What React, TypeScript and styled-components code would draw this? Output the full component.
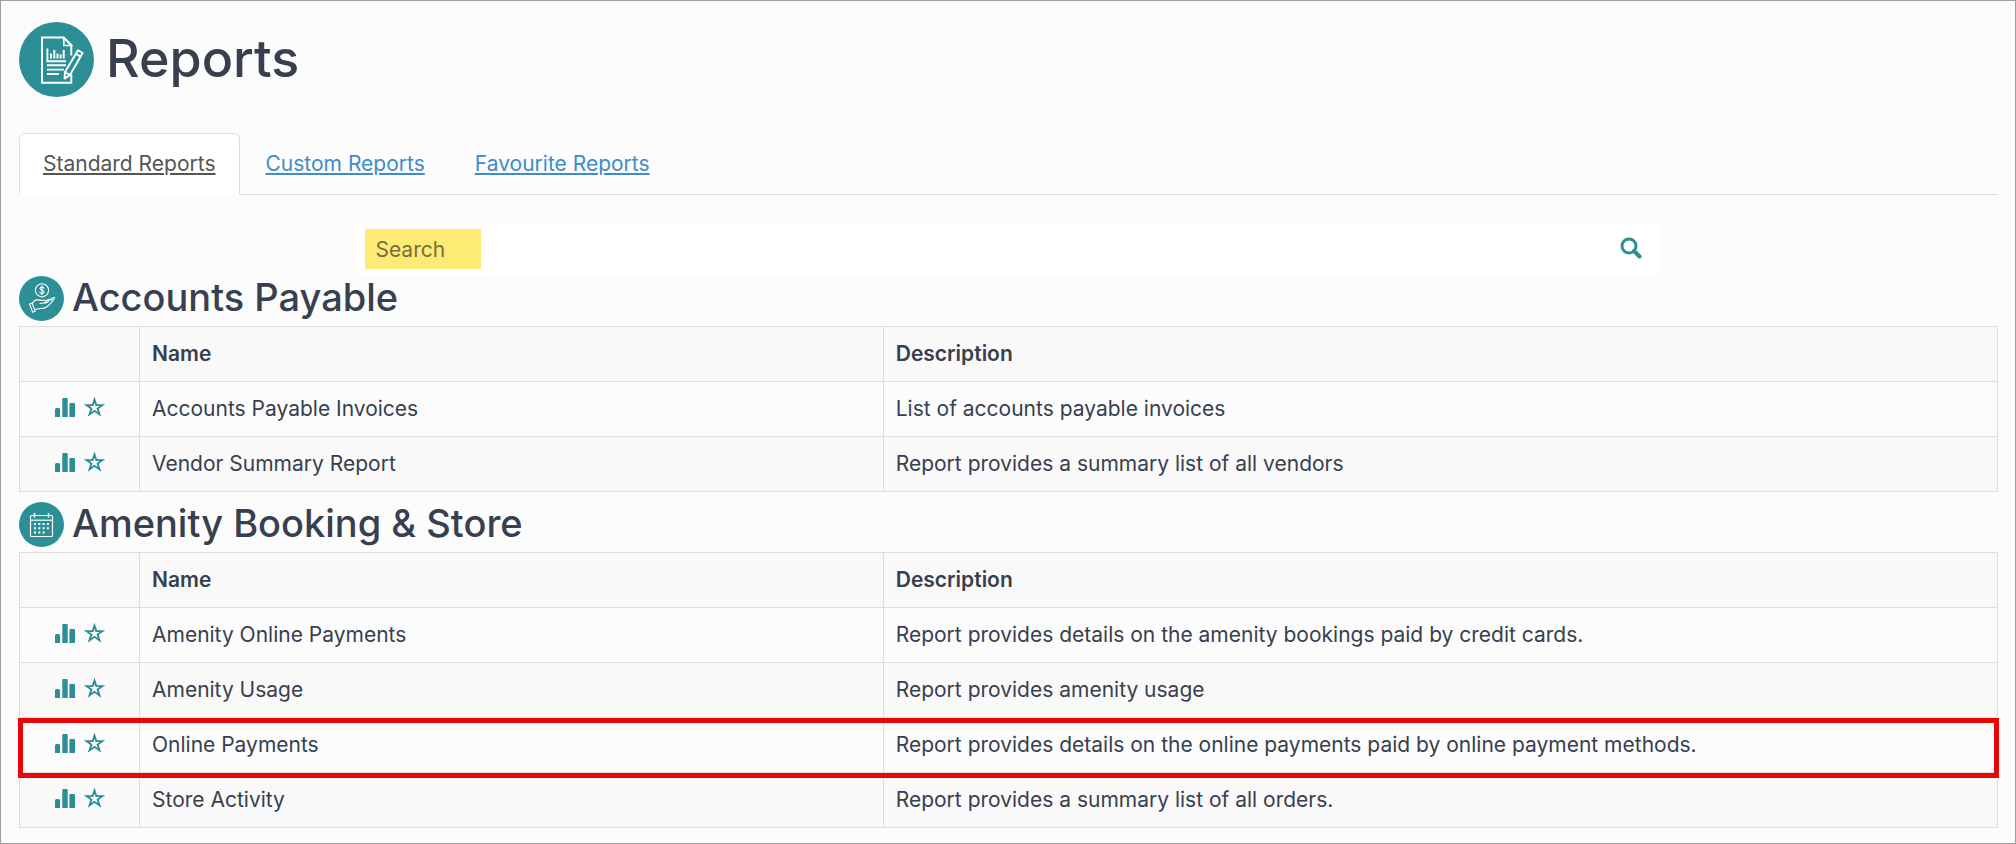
import React from "react";
import styled, { createGlobalStyle } from "styled-components";

const teal = "#2b8f95";
const ink = "#383f4e";
const line = "#dddddd";

const GlobalStyle = createGlobalStyle`
  *, *::before, *::after { box-sizing: border-box; }
  body {
    margin: 0;
    background: #fcfcfc;
    color: ${ink};
    font-family: Inter, "Liberation Sans", sans-serif;
    font-size: 21px;
    line-height: 30px;
  }
`;

const Page = styled.main`
  min-height: 100vh;
  padding: 21px 17px 14px 18px;
  border: 1px solid #a0a0a0;
`;

const PageHeader = styled.header`
  display: flex;
  align-items: flex-start;
  gap: 12px;
  margin-bottom: 36px;
`;

const PageTitle = styled.h1`
  margin: 0;
  font-size: 52px;
  font-weight: 500;
  line-height: 73px;
`;

const Tabs = styled.nav`
  display: flex;
  gap: 2px;
  border-bottom: 1px solid ${line};
`;

const Tab = styled.a<{ $active?: boolean }>`
  margin-bottom: -1px;
  padding: 15px 23px;
  border: 1px solid ${(p) => (p.$active ? line : "transparent")};
  border-bottom-color: ${(p) => (p.$active ? "#ffffff" : "transparent")};
  border-radius: 6px 6px 0 0;
  background: ${(p) => (p.$active ? "#ffffff" : "transparent")};
  color: ${(p) => (p.$active ? "#555555" : "#428bca")};
  text-decoration: underline;
  text-decoration-thickness: 2px;
  text-underline-offset: 2px;
`;

const SearchForm = styled.form`
  display: flex;
  align-items: center;
  margin: 29px 17% 2px;
  padding: 5px 10px;
  border-radius: 6px;
  background: #ffffff;
`;

const SearchInput = styled.input`
  flex: 1;
  min-width: 0;
  height: 40px;
  padding: 0 10px;
  border: 0;
  outline: 0;
  background: linear-gradient(#fdeb75, #fdeb75) left / 116px 100% no-repeat;
  color: ${ink};
  font: inherit;
  &::placeholder { color: #75703f; opacity: 1; }
`;

const IconButton = styled.button`
  display: inline-flex;
  padding: 0;
  border: 0;
  background: none;
  color: ${teal};
  cursor: pointer;
`;

const SearchButton = styled(IconButton)`
  padding: 0 10px 3px;
`;

const Section = styled.section`
  margin-bottom: 10px;
  &:last-child { margin-bottom: 0; }
`;

const SectionHeader = styled.header`
  display: flex;
  align-items: flex-start;
  gap: 8px;
  margin-bottom: 5px;
`;

const SectionTitle = styled.h2`
  margin: 0;
  font-size: 38px;
  font-weight: 500;
  line-height: 42px;
`;

const Table = styled.table`
  width: 100%;
  table-layout: fixed;
  border-collapse: collapse;
`;

const ActionCol = styled.col`
  width: 120px;
`;

const NameCol = styled.col`
  width: 37.6%;
`;

const Row = styled.tr<{ $marked?: boolean }>`
  position: ${(p) => (p.$marked ? "relative" : "static")};
  background: #fcfcfc;
  &:nth-child(even) { background: #f9f9f9; }
`;

const Marker = styled.span`
  position: absolute;
  inset: 0 -1px -5px -2px;
  border: 5px solid #ea0606;
  pointer-events: none;
`;

const HeadRow = styled.tr`
  background: #f9f9f9;
`;

const HeadCell = styled.th`
  height: 55px;
  padding: 12px;
  border: 1px solid ${line};
  text-align: left;
  font-weight: 600;
`;

const Cell = styled.td`
  height: 55px;
  padding: 12px;
  border: 1px solid ${line};
`;

const Actions = styled.div`
  display: flex;
  justify-content: center;
  gap: 9px;
  padding-bottom: 4px;
`;

const ReportsBadge = () => (
  <svg width="75" height="75" viewBox="0 0 75 75" fill="none" stroke="#fff" aria-hidden="true">
    <circle cx="37.5" cy="37.5" r="37.5" fill={teal} stroke="none" />
    <path d="M52.3 34V23.5L44.8 16H23v45.2h29.3V53" strokeWidth="1.9" transform="translate(0 -0.5)" />
    <path d="M44.8 16v7.5h7.5z" strokeWidth="1.7" />
    <path d="M28.4 26.5v12.8H47" strokeWidth="1.9" />
    <path d="M32 36.500v-5M35.300 36.500V28M38.500 36.500v-5M41.600 36.500v-4M44.700 36.500V28" strokeWidth="2" />
    <path d="M28 43.200h19M28 47.600h17M28 52h12" strokeWidth="1.900" />
    <path d="M59 28.200l4.600 2.800L51 53l-5.400 3.600.3-6.400zM56.900 31.800l4.600 2.800M46 50.200l4.900 2.800" strokeWidth="1.900" strokeLinejoin="round" fill={teal} />
  </svg>
);

const PayableBadge = () => (
  <svg width="45" height="45" viewBox="0 0 45 45" fill="none" stroke="#fff" strokeWidth="1.1" strokeLinejoin="round" strokeLinecap="round" aria-hidden="true">
    <circle cx="22.5" cy="22.5" r="22.5" fill={teal} stroke="none" />
    <circle cx="23" cy="14.3" r="6.6" />
    <path d="M25 12.2c-.4-.9-1.1-1.2-2-1.2-1.2 0-2 .6-2 1.6 0 2.2 4.1 1.1 4.1 3.4 0 1-.9 1.6-2.1 1.6-1.1 0-1.9-.5-2.2-1.4M23 9.8v9" />
    <path d="M10.6 28l2.5-1 3 8.2-2.5 1zM13.4 27.6c1.2-2.6 3-3.9 5.3-3.7 2.2.2 3 .6 5.2.4 1.3-.1 2.8-.3 3.2.5.5 1.1-.5 1.7-1.7 1.9l-4.5.8M26 27.3c2.600-.4 3.700-2.500 5.300-4 1.100-.9 2.200-.4 1.500.7M32 23.600c1.600-1.800 2.900-2.800 3.500-2.200.5.600-1.200 3-3.200 5.200-2.200 2.400-4.300 4.800-7.300 5.500-3.600.8-6.400-.2-9.300 2M27.100 25.200c1.200-1.400 2.400-2.600 3.500-1.800" />
  </svg>
);

const CalendarBadge = () => (
  <svg width="45" height="45" viewBox="0 0 45 45" fill="none" stroke="#fff" aria-hidden="true">
    <circle cx="22.5" cy="22.5" r="22.5" fill={teal} stroke="none" />
    <rect x="11.500" y="13.500" width="22" height="21" rx="1" strokeWidth="1.200" />
    <path d="M11.500 18.200h22" strokeWidth="1.200" />
    <path d="M15.500 11v4.500M29.500 11v4.500" strokeWidth="1.600" />
    <path d="M15 22h15M15 26.200h15M15 30.400h11" strokeWidth="2" strokeDasharray="2 2.300" />
  </svg>
);

const BarsIcon = () => (
  <svg width="20" height="20" viewBox="0 0 20 20" fill="currentColor" aria-hidden="true">
    <path d="M0 20v-7.500q0-1.500 1.500-1.500h2q1.500 0 1.500 1.500V20zM7.300 20V2q0-1 1-1h3.400q1 0 1 1v18zM14.400 20V7q0-1 1-1H19q1 0 1 1v13z" />
  </svg>
);

const StarIcon = () => (
  <svg width="21" height="20" viewBox="0 0 21 20" fill="none" stroke="currentColor" strokeWidth="1.900" aria-hidden="true">
    <path d="M10.500 2.600l1.800 5.500h6.200l-4.900 3.500 1.900 5.800-5-3.600-5 3.600 1.900-5.800-4.900-3.500h6.200z" />
  </svg>
);

const SearchIcon = () => (
  <svg width="22" height="22" viewBox="0 0 22 22" fill="none" stroke="currentColor" aria-hidden="true">
    <circle cx="9" cy="9" r="7" strokeWidth="3" />
    <path d="M14 14l5.500 5.500" strokeWidth="4" strokeLinecap="round" />
  </svg>
);

interface Report {
  name: string;
  description: string;
  marked?: boolean;
}

interface Group {
  title: string;
  badge: React.ReactNode;
  reports: Report[];
}

const groups: Group[] = [
  {
    title: "Accounts Payable",
    badge: <PayableBadge />,
    reports: [
      { name: "Accounts Payable Invoices", description: "List of accounts payable invoices" },
      { name: "Vendor Summary Report", description: "Report provides a summary list of all vendors" },
    ],
  },
  {
    title: "Amenity Booking & Store",
    badge: <CalendarBadge />,
    reports: [
      { name: "Amenity Online Payments", description: "Report provides details on the amenity bookings paid by credit cards." },
      { name: "Amenity Usage", description: "Report provides amenity usage" },
      {
        name: "Online Payments",
        description: "Report provides details on the online payments paid by online payment methods.",
        marked: true,
      },
      { name: "Store Activity", description: "Report provides a summary list of all orders." },
    ],
  },
];

const ReportGroup = ({ title, badge, reports }: Group) => (
  <Section>
    <SectionHeader>
      {badge}
      <SectionTitle>{title}</SectionTitle>
    </SectionHeader>
    <Table aria-label={title}>
      <colgroup>
        <ActionCol />
        <NameCol />
        <col />
      </colgroup>
      <thead>
        <HeadRow>
          <HeadCell aria-label="Actions" />
          <HeadCell scope="col">Name</HeadCell>
          <HeadCell scope="col">Description</HeadCell>
        </HeadRow>
      </thead>
      <tbody>
        {reports.map((r) => (
          <Row key={r.name} $marked={r.marked}>
            <Cell>
              <Actions>
                <IconButton type="button" aria-label={`Run ${r.name}`}>
                  <BarsIcon />
                </IconButton>
                <IconButton type="button" aria-label={`Add ${r.name} to favourites`}>
                  <StarIcon />
                </IconButton>
              </Actions>
              {r.marked && <Marker />}
            </Cell>
            <Cell>{r.name}</Cell>
            <Cell>{r.description}</Cell>
          </Row>
        ))}
      </tbody>
    </Table>
  </Section>
);

export default function App() {
  return (
    <>
      <GlobalStyle />
      <Page>
        <PageHeader>
          <ReportsBadge />
          <PageTitle>Reports</PageTitle>
        </PageHeader>
        <Tabs aria-label="Report types">
          <Tab href="#standard" $active aria-current="page">Standard Reports</Tab>
          <Tab href="#custom">Custom Reports</Tab>
          <Tab href="#favourite">Favourite Reports</Tab>
        </Tabs>
        <SearchForm role="search" onSubmit={(e) => e.preventDefault()}>
          <SearchInput type="text" placeholder="Search" aria-label="Search" />
          <SearchButton type="submit" aria-label="Search reports">
            <SearchIcon />
          </SearchButton>
        </SearchForm>
        {groups.map((g) => (
          <ReportGroup key={g.title} {...g} />
        ))}
      </Page>
    </>
  );
}
